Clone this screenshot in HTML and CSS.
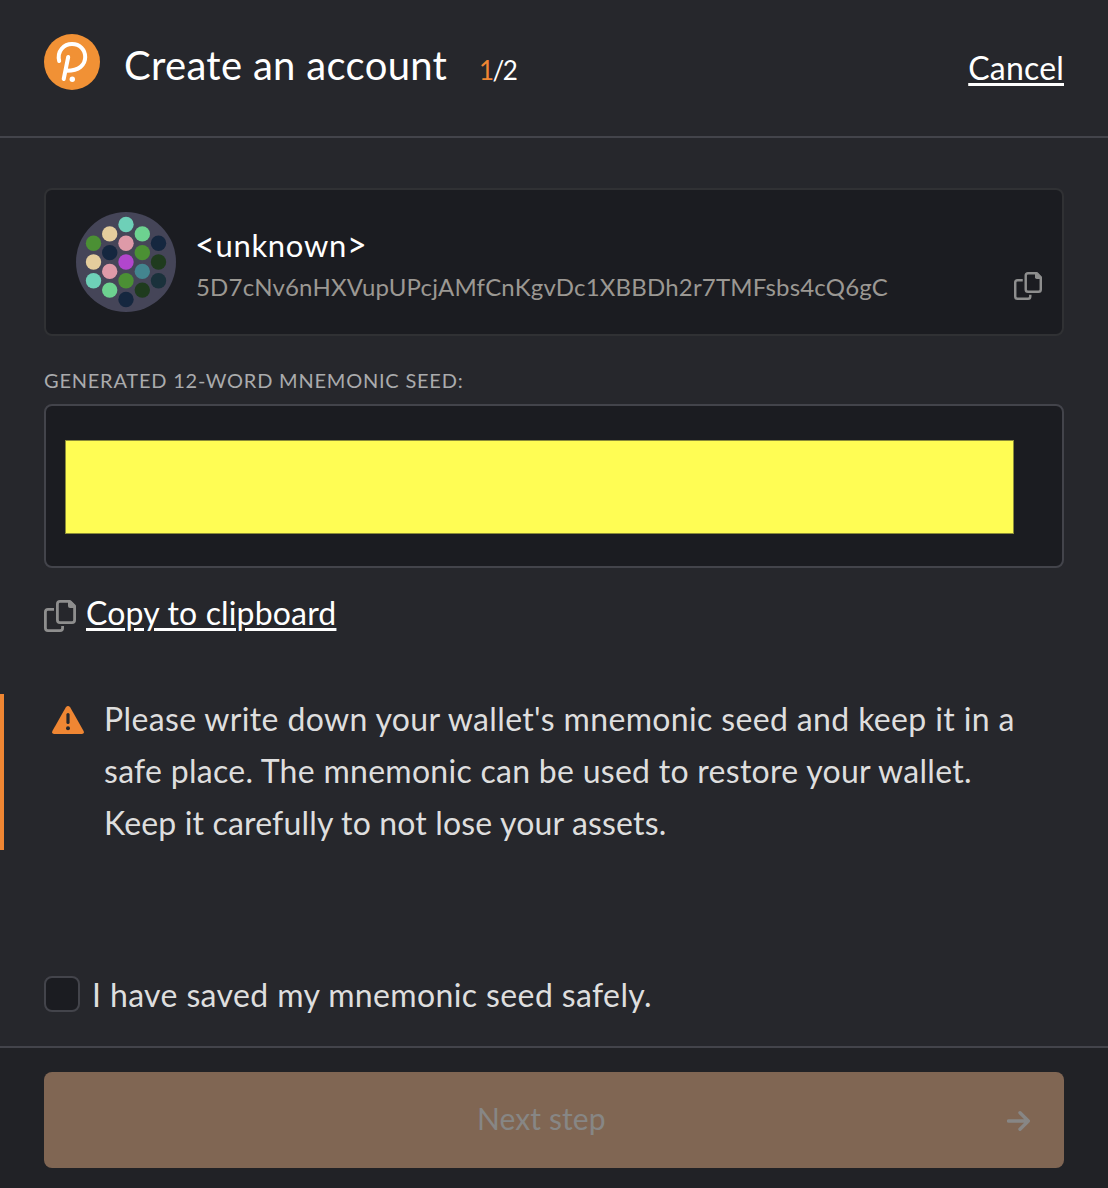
FILE: index.html
```html
<!DOCTYPE html>
<html lang="en">
<head>
<meta charset="utf-8">
<title>Create an account</title>
<link rel="stylesheet" href="styles.css">
</head>
<body>
<svg class="sprite" aria-hidden="true">
  <symbol id="copy" viewBox="0 0 32 32">
    <path d="M10 9.4H4Q1.400 9.400 1.400 12v16q0 2.600 2.600 2.600h12q2.600 0 2.600-2.600v-2" fill="none" stroke="currentColor" stroke-width="2.800"/>
    <path d="M16 1.400h10l4.600 4.600v14q0 2.600-2.600 2.600H16q-2.600 0-2.600-2.600V4q0-2.600 2.600-2.600z" fill="none" stroke="currentColor" stroke-width="2.800" stroke-linejoin="round"/>
    <path d="M24 1h3l4 4v3h-5q-2 0-2-2z" fill="currentColor"/>
  </symbol>
</svg>
<header class="header">
  <svg class="logo" viewBox="0 0 56 56">
    <circle cx="28" cy="28" r="28" fill="#f19135"/>
    <path d="M15.200 27C12.800 17 20 10 28 10c8 0 13.200 6 13.200 13.100C41.200 31 35 36.800 23 36.800M24.200 23L19.700 45" fill="none" stroke="#fff" stroke-width="4" stroke-linejoin="round" stroke-linecap="round"/>
    <circle cx="28.300" cy="45.300" r="2.700" fill="#fff"/>
  </svg>
  <h1 class="title">Create an account</h1>
  <div class="step"><span class="current">1</span>/2</div>
  <a class="link cancel">Cancel</a>
</header>
<main class="content">
  <section class="account">
    <svg class="identicon" viewBox="-50 -50 100 100">
      <circle r="50" fill="#454558"/>
      <g fill="#6ed0b8"><circle cy="-37.500" r="7.700"/><circle cx="-32.500" cy="18.800" r="7.700"/></g>
      <g fill="#6dd290"><circle cx="16.300" cy="-28.100" r="7.700"/><circle cx="-16.300" cy="28.100" r="7.700"/></g>
      <g fill="#e4cd9d"><circle cx="-16.300" cy="-28.100" r="7.700"/><circle cx="-32.500" r="7.700"/></g>
      <g fill="#4b9034"><circle cx="-32.500" cy="-18.800" r="7.700"/><circle cx="16.300" cy="-9.400" r="7.700"/><circle cy="18.800" r="7.700"/></g>
      <g fill="#de9aa8"><circle cy="-18.800" r="7.700"/><circle cx="-16.300" cy="9.400" r="7.700"/></g>
      <g fill="#15273f"><circle cx="32.500" cy="-18.800" r="7.700"/><circle cx="-16.300" cy="-9.400" r="7.700"/><circle cy="37.500" r="7.700"/></g>
      <g fill="#1f3b1e"><circle cx="32.500" r="7.700"/><circle cx="16.300" cy="28.100" r="7.700"/></g>
      <circle r="7.700" fill="#b146cd"/>
      <circle cx="16.300" cy="9.400" r="7.700" fill="#43858f"/>
      <circle cx="32.500" cy="18.800" r="7.700" fill="#1a313b"/>
    </svg>
    <div class="details">
      <div class="name"><span class="bracket">&lt;</span>unknown<span class="bracket">&gt;</span></div>
      <div class="address">5D7cNv6nHXVupUPcjAMfCnKgvDc1XBBDh2r7TMFsbs4cQ6gC</div>
    </div>
    <svg class="copy-address"><use href="#copy"/></svg>
  </section>
  <div class="label">Generated 12-word mnemonic seed:</div>
  <div class="seed"><div class="redaction"></div></div>
  <div class="copy-row">
    <svg class="copy-seed"><use href="#copy"/></svg>
    <a class="link copy-link">Copy to clipboard</a>
  </div>
  <div class="warning">
    <svg class="warning-icon" viewBox="0 0 32 28">
      <path d="M13.700 1.400q2.300-2.800 4.600 0L31.600 25q1 2.600-1.700 3H2.100Q-.600 27.600.400 25z" fill="#ef8633"/>
      <path d="M16 8.500v8" stroke="#26272c" stroke-width="3.200" stroke-linecap="round"/>
      <circle cx="16" cy="22.300" r="2" fill="#26272c"/>
    </svg>
    <p class="warning-text"><span class="line-wide">Please write down your wallet's mnemonic seed and keep it in a</span><br><span class="line-medium">safe place. The mnemonic can be used to restore your wallet.</span><br><span class="line-tight">Keep it carefully to not lose your assets.</span></p>
  </div>
  <label class="confirm"><span class="checkbox"></span><span class="confirm-text">I have saved my mnemonic seed safely.</span></label>
</main>
<footer class="footer">
  <div class="button">
    <span class="button-text">Next step</span>
    <svg class="arrow" viewBox="0 0 24 20"><path d="M1.500 10H21M13 1.800L21.300 10L13 18.200" fill="none" stroke="currentColor" stroke-width="3.400" stroke-linecap="round" stroke-linejoin="round"/></svg>
  </div>
</footer>
</body>
</html>
```
FILE: styles.css
```css
* { box-sizing: border-box; }
body {
  margin: 0;
  width: 1108px;
  height: 1188px;
  display: flex;
  flex-direction: column;
  background: #26272c;
  color: #fff;
  font-family: Lato, "Open Sans", sans-serif;
  font-size: 32px;
  overflow: hidden;
}
svg { display: block; flex: none; }
.sprite { position: absolute; width: 0; height: 0; }
.header {
  height: 138px;
  flex: none;
  padding: 34px 44px 0;
  display: flex;
  align-items: flex-start;
  border-bottom: 2px solid #43444b;
  white-space: nowrap;
}
.logo { width: 56px; height: 56px; }
.title {
  margin: 5px 0 0 24px;
  width: 331px;
  font-size: 40px;
  line-height: 52px;
  font-weight: 400;
  letter-spacing: .32px;
}
.step { margin: 16px 0 0 24px; font-size: 26px; line-height: 40px; letter-spacing: -1.5px; }
.current { color: #ef8633; }
.link {
  text-decoration: underline;
  text-decoration-thickness: 3px;
  text-underline-offset: 3px;
}
.cancel { margin: 8px 0 0 auto; line-height: 52px; letter-spacing: .2px; }
.content { height: 908px; flex: none; padding: 50px 44px 0; }
.account {
  height: 148px;
  padding: 22px 20px 0 30px;
  display: flex;
  align-items: flex-start;
  background: #1b1c21;
  border: 2px solid #303134;
  border-radius: 8px;
}
.identicon { width: 100px; height: 100px; }
.details { margin-left: 19px; white-space: nowrap; }
.name { margin-top: 12px; height: 42px; font-size: 31px; line-height: 42px; letter-spacing: .7px; }
.bracket { font-size: 34px; line-height: 30px; }
.address { margin-left: 1px; font-size: 24px; line-height: 42px; letter-spacing: .19px; color: #9b9893; }
.copy-address { width: 28px; height: 28px; margin: 60px 0 0 auto; color: #8e8e8e; }
.label {
  height: 68px;
  padding-top: 28px;
  font-size: 20px;
  line-height: 32px;
  letter-spacing: .78px;
  text-transform: uppercase;
  color: #aaabad;
}
.seed {
  height: 164px;
  padding: 34px 19px;
  background: #1b1c21;
  border: 2px solid #43444b;
  border-radius: 8px;
}
.redaction { width: 949px; height: 94px; background: #fffd54; border: 1px solid #8b8c38; }
.copy-row { height: 126px; padding-top: 19px; display: flex; align-items: flex-start; }
.copy-seed { width: 32px; height: 32px; margin: 13px 10px 0 0; color: #8e8e8e; }
.copy-link { line-height: 52px; letter-spacing: .16px; }
.warning {
  height: 156px;
  margin: 0 -44px;
  padding-left: 48px;
  display: flex;
  align-items: flex-start;
  border-left: 4px solid #ef8633;
}
.warning-icon { width: 32px; height: 28px; margin: 12px 20px 0 0; }
.warning-text { margin: -1px 0 0; line-height: 52px; color: #dedede; white-space: nowrap; }
.line-wide { letter-spacing: .36px; }
.line-medium { letter-spacing: .28px; }
.line-tight { letter-spacing: .16px; }
.confirm { display: flex; align-items: flex-start; margin-top: 126px; color: #dedede; }
.checkbox {
  width: 36px;
  height: 36px;
  background: #1b1c21;
  border: 2px solid #43444b;
  border-radius: 8px;
}
.confirm-text { margin: -7px 0 0 12px; line-height: 52px; letter-spacing: .38px; }
.footer {
  height: 142px;
  flex: none;
  padding: 24px 44px 0;
  background: #212226;
  border-top: 2px solid #43444b;
}
.button {
  height: 96px;
  padding: 0 33px 0 433px;
  display: flex;
  align-items: center;
  justify-content: space-between;
  background: #806653;
  border-radius: 8px;
  color: #878685;
  font-size: 30px;
}
.button-text { margin-bottom: 4px; letter-spacing: .1px; }
.arrow { width: 24px; height: 20px; margin-top: 2px; }
```
